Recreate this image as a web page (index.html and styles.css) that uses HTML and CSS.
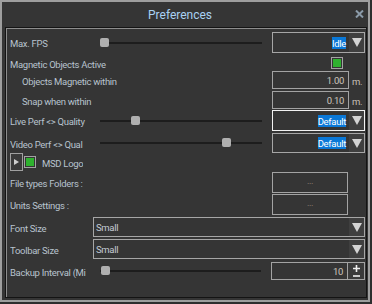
FILE: index.html
```html
<!DOCTYPE html>
<html lang="en">
<head>
  <meta charset="UTF-8">
  <title>Preferences</title>
  <link rel="stylesheet" href="styles.css">
</head>
<body>
  <div class="window">
    <!-- Title bar -->
    <div class="titlebar">
      <span class="title">Preferences</span>
      <svg class="close" width="9" height="8" viewBox="0 0 9 8">
        <path d="M1 0.5 L8 7.5 M8 0.5 L1 7.5" stroke="#8b9ba9" stroke-width="2"/>
      </svg>
    </div>

    <!-- Settings panel -->
    <div class="panel">
      <div class="row r1">
        <span class="label">Max. FPS</span>
        <div class="slider"><span class="knob" style="left: 0px"></span></div>
        <div class="combo">
          <span class="value"><span class="sel">Idle</span></span>
          <span class="arrow"></span>
        </div>
      </div>

      <div class="row r2">
        <span class="label wide">Magnetic Objects Active</span>
        <span class="check"></span>
      </div>

      <div class="row r3">
        <span class="label wide indent">Objects Magnetic within</span>
        <div class="field">1.00</div>
        <span class="unit">m.</span>
      </div>

      <div class="row r4">
        <span class="label wide indent">Snap when within</span>
        <div class="field">0.10</div>
        <span class="unit">m.</span>
      </div>

      <div class="row r5">
        <span class="label">Live Perf &lt;&gt; Quality</span>
        <div class="slider"><span class="knob" style="left: 31px"></span></div>
        <div class="combo focused">
          <span class="value"><span class="sel">Default</span></span>
          <span class="arrow"></span>
        </div>
      </div>

      <div class="row r6">
        <span class="label">Video Perf &lt;&gt; Qual</span>
        <div class="slider"><span class="knob" style="left: 122px"></span></div>
        <div class="combo">
          <span class="value"><span class="sel">Default</span></span>
          <span class="arrow"></span>
        </div>
      </div>

      <div class="row r7">
        <span class="expander"></span>
        <span class="check small"></span>
        <span class="label logo">MSD Logo</span>
      </div>

      <div class="row r8">
        <span class="label wide">File types Folders :</span>
        <div class="button">...</div>
      </div>

      <div class="row r9">
        <span class="label wide">Units Settings :</span>
        <div class="button">...</div>
      </div>

      <div class="row r10">
        <span class="label short">Font Size</span>
        <div class="combo long">
          <span class="value left">Small</span>
          <span class="arrow"></span>
        </div>
      </div>

      <div class="row r11">
        <span class="label short">Toolbar Size</span>
        <div class="combo long">
          <span class="value left">Small</span>
          <span class="arrow"></span>
        </div>
      </div>

      <div class="row r12">
        <span class="label">Backup Interval (Mi</span>
        <div class="slider"><span class="knob" style="left: 1px"></span></div>
        <div class="field">10</div>
        <div class="spin">
          <svg width="7" height="7" viewBox="0 0 7 7">
            <path d="M0 3.5 H7 M3.5 0 V7" stroke="#eeeeee" stroke-width="1.6"/>
          </svg>
          <svg width="7" height="2" viewBox="0 0 7 2">
            <path d="M0 1 H7" stroke="#eeeeee" stroke-width="1.6"/>
          </svg>
        </div>
      </div>
    </div>
  </div>
</body>
</html>
```

FILE: styles.css
```css
/* Global */
body {
  margin: 0;
  background-color: #2e2e2e;
  font-family: 'Roboto', 'Liberation Sans', sans-serif;
  font-size: 9.5px;
  letter-spacing: -0.3px;
  color: #b8c3ce;
}

/* Window frame */
.window {
  width: 370px;
  height: 302px;
  box-sizing: border-box;
  border: 2px solid #9e9e9e;
  background-color: #353535;
  display: flex;
  flex-direction: column;
}

.titlebar {
  height: 25px;
  display: flex;
  align-items: center;
}

.title {
  margin-left: 146px;
  font-size: 12px;
  letter-spacing: 0;
  color: #a9d1f3;
  padding-top: 1px;
}

.close {
  margin-left: auto;
  margin-right: 4px;
  margin-top: -2px;
}

/* Settings panel */
.panel {
  margin-left: 3px;
  width: 362px;
  height: 271px;
  box-sizing: border-box;
  border: 1px solid #141414;
  box-shadow: inset 1px 1px 0 #8d8d8d;
  padding: 4px 1px 0 4px;
  display: flex;
  flex-direction: column;
}

.row {
  display: flex;
  align-items: center;
  flex-shrink: 0;
}

.r1 { height: 21px; }
.r2 { height: 12px; margin-top: 4px; }
.r3 { height: 18px; margin-top: 2px; }
.r4 { height: 18px; margin-top: 2px; }
.r5 { height: 21px; margin-top: 1px; }
.r6 { height: 20px; margin-top: 2px; }
.r7 { height: 18px; }
.r8 { height: 21px; margin-top: 1px; }
.r9 { height: 21px; margin-top: 1px; }
.r10 { height: 20px; margin-top: 2px; }
.r11 { height: 20px; margin-top: 2px; }
.r12 { height: 18px; margin-top: 3px; }

.label {
  width: 90px;
  flex-shrink: 0;
  white-space: nowrap;
  overflow: hidden;
  padding-top: 2px;
}

.label.wide {
  width: 262px;
}

.label.short {
  width: 83px;
}

.label.indent {
  box-sizing: border-box;
  padding-left: 12px;
}

.label.logo {
  width: auto;
  margin-left: 6px;
}

/* Slider */
.slider {
  position: relative;
  width: 162px;
  height: 2px;
  margin-right: 10px;
  background-color: #1d1d1d;
}

.knob {
  position: absolute;
  top: -4px;
  width: 9px;
  height: 9px;
  border-radius: 2px;
  background-color: #b0b0b0;
}

/* Dropdowns */
.combo {
  width: 93px;
  height: 100%;
  box-sizing: border-box;
  border: 1px solid #a6a6a6;
  display: flex;
}

.combo.focused {
  border-color: #f2f2f2;
}

.combo.long {
  flex: 1;
}

.combo .value {
  flex: 1;
  display: flex;
  align-items: center;
  justify-content: flex-end;
  padding-right: 3px;
  color: #ffffff;
}

.combo .value.left {
  justify-content: flex-start;
  padding-left: 2px;
  color: #c4ccd4;
}

.sel {
  background-color: #0a78d7;
  padding: 1px 0 0;
  line-height: 11px;
}

.arrow {
  width: 15px;
  background-color: #3f3f3f;
  display: flex;
  align-items: center;
  justify-content: center;
}

.arrow::after {
  content: "";
  border-left: 5px solid transparent;
  border-right: 5px solid transparent;
  border-top: 9px solid #d4d4d4;
}

/* Checkboxes */
.check {
  width: 12px;
  height: 12px;
  box-sizing: border-box;
  border: 1px solid #a3a3a3;
  padding: 1px;
  background-color: #2fb22f;
  background-clip: content-box;
  margin-left: 59px;
}

.check.small {
  margin-left: 1px;
}

.expander {
  width: 13px;
  height: 18px;
  box-sizing: border-box;
  border: 1px solid #a0a0a0;
  background-color: #3a3a3a;
  display: flex;
  align-items: center;
  justify-content: center;
}

.expander::after {
  content: "";
  border-top: 3px solid transparent;
  border-bottom: 3px solid transparent;
  border-left: 5px solid #cfcfcf;
}

/* Inputs and buttons */
.field,
.button {
  width: 77px;
  height: 100%;
  box-sizing: border-box;
  border: 1px solid #a3a3a3;
  display: flex;
  align-items: center;
  justify-content: flex-end;
  padding: 1px 4px 0 0;
  color: #cdc6be;
}

.button {
  width: 76px;
  justify-content: center;
  padding: 0 0 3px;
  color: #9b8a7c;
  font-size: 9px;
}

.unit {
  margin-left: 3px;
  padding-top: 2px;
  color: #c9c2ba;
}

.spin {
  width: 17px;
  height: 100%;
  box-sizing: border-box;
  border: 1px solid #a3a3a3;
  border-left: none;
  background-color: #3a3a3a;
  display: flex;
  flex-direction: column;
  align-items: center;
  justify-content: center;
  gap: 3px;
}
```
